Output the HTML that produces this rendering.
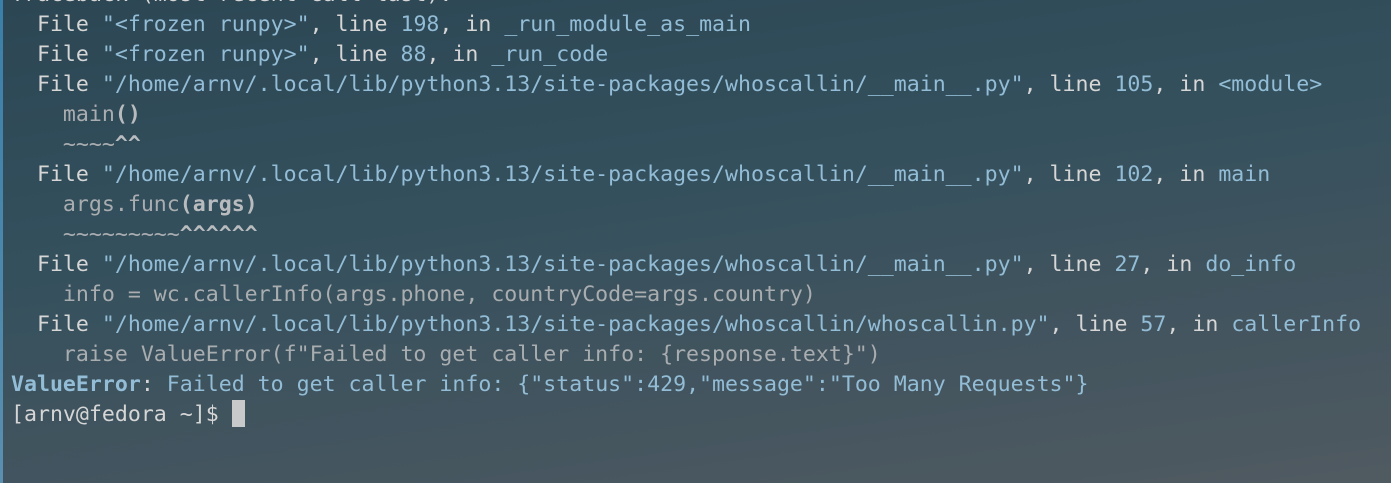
<!DOCTYPE html>
<html><head><meta charset="utf-8"><style>
html,body{margin:0;padding:0;}
body{width:1391px;height:483px;overflow:hidden;position:relative;
background:linear-gradient(172deg,#2c4654 0%,#34505d 40%,#44555f 75%,#505a61 100%);}
.strip{position:absolute;left:0;top:0;width:3px;height:483px;background:linear-gradient(#3a7fa8,#5a8fb0);}
pre{margin:0;position:absolute;left:11px;top:-20px;font-family:"DejaVu Sans Mono","Liberation Mono",monospace;
font-size:21.57px;line-height:30px;color:#d6d6d6;white-space:pre;}
.b{color:#93bdd6}
.g{color:#a9adb0}
.gb{color:#b9bcbf;font-weight:bold}
.eb{color:#93bdd6;font-weight:bold}
.cur{display:inline-block;width:13px;height:27px;background:#c8c9ca;vertical-align:-6px;}
</style></head><body><div class="strip"></div>
<pre>Traceback (most recent call last):
  File <span class="b">"&lt;frozen runpy&gt;"</span>, line <span class="b">198</span>, in <span class="b">_run_module_as_main</span>
  File <span class="b">"&lt;frozen runpy&gt;"</span>, line <span class="b">88</span>, in <span class="b">_run_code</span>
  File <span class="b">"/home/arnv/.local/lib/python3.13/site-packages/whoscallin/__main__.py"</span>, line <span class="b">105</span>, in <span class="b">&lt;module&gt;</span>
<span class="g">    main</span><span class="gb">()</span>
<span class="g">    ~~~~</span><span class="gb">^^</span>
  File <span class="b">"/home/arnv/.local/lib/python3.13/site-packages/whoscallin/__main__.py"</span>, line <span class="b">102</span>, in <span class="b">main</span>
<span class="g">    args.func</span><span class="gb">(args)</span>
<span class="g">    ~~~~~~~~~</span><span class="gb">^^^^^^</span>
  File <span class="b">"/home/arnv/.local/lib/python3.13/site-packages/whoscallin/__main__.py"</span>, line <span class="b">27</span>, in <span class="b">do_info</span>
<span class="g">    info = wc.callerInfo(args.phone, countryCode=args.country)</span>
  File <span class="b">"/home/arnv/.local/lib/python3.13/site-packages/whoscallin/whoscallin.py"</span>, line <span class="b">57</span>, in <span class="b">callerInfo</span>
<span class="g">    raise ValueError(f"Failed to get caller info: {response.text}")</span>
<span class="eb">ValueError</span>: <span class="b">Failed to get caller info: {"status":429,"message":"Too Many Requests"}</span>
[arnv@fedora ~]$ <span class="cur"></span></pre>
</body></html>
